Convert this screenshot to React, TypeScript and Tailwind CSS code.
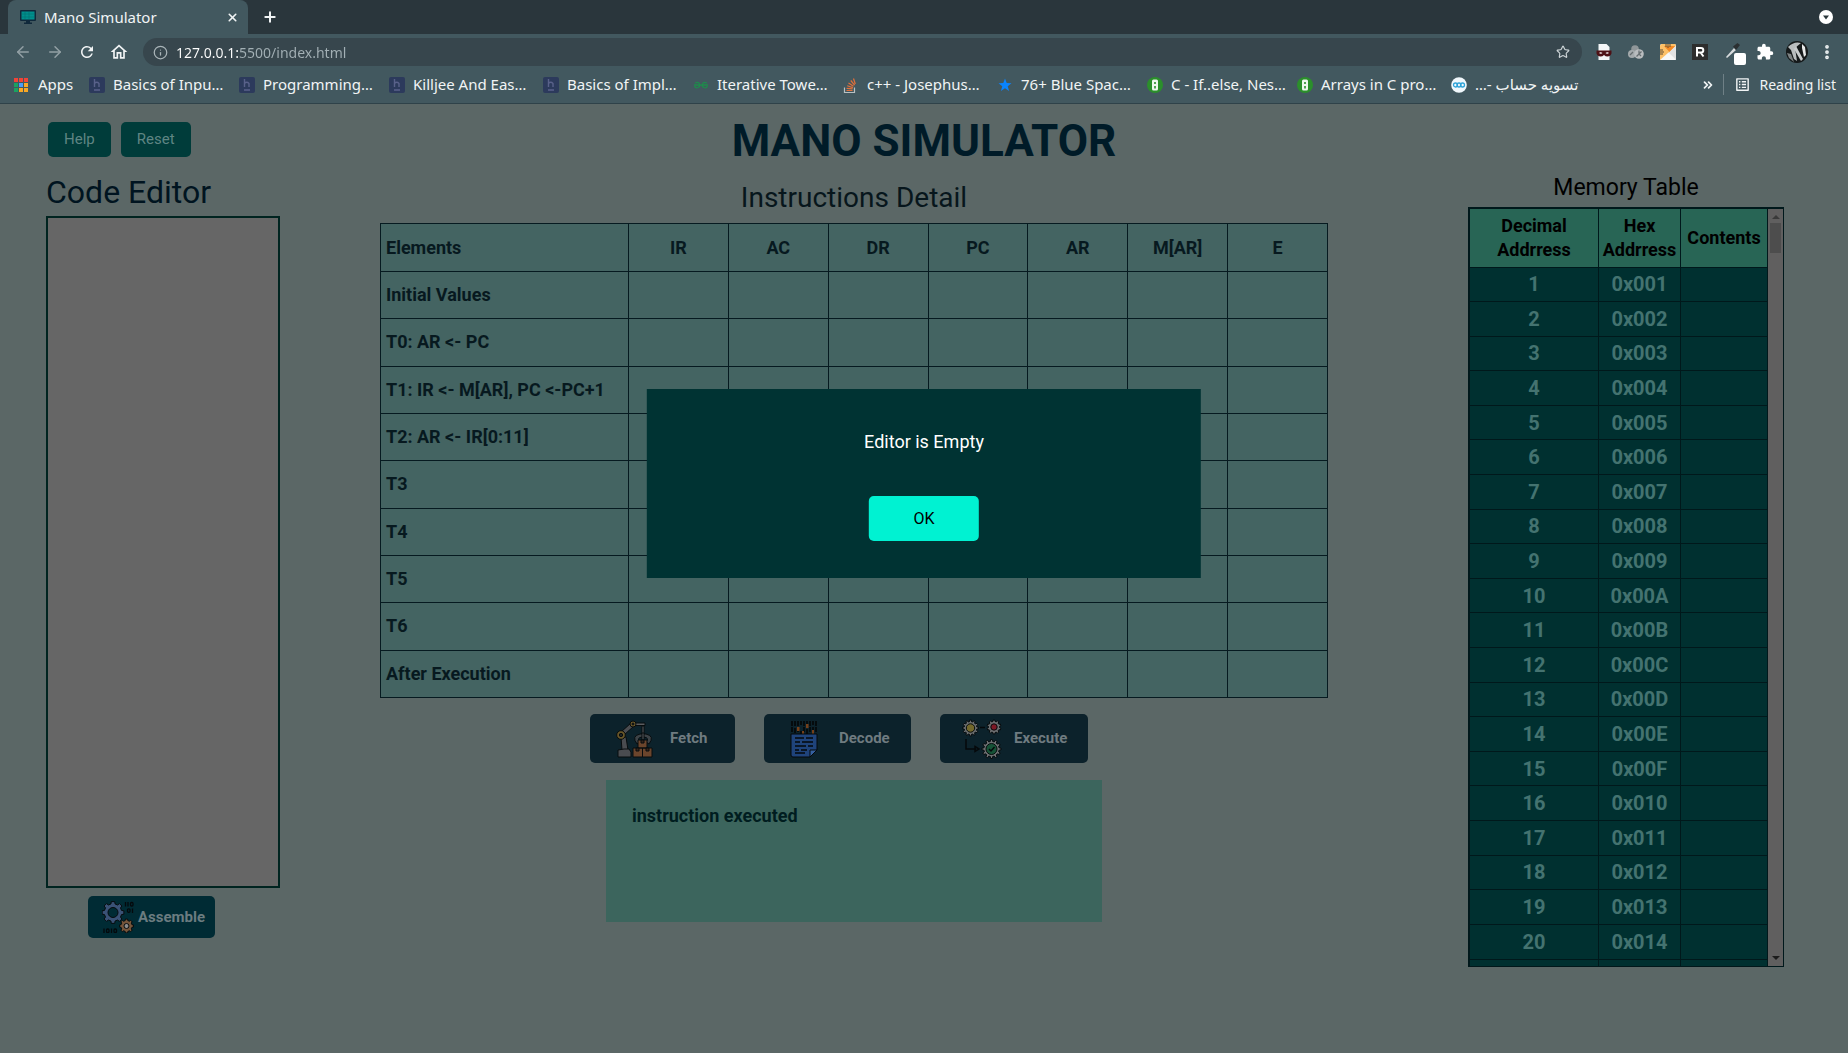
import React from "react";
import {
  ArrowLeft,
  ArrowRight,
  ChevronsRight,
  Info,
  MoreVertical,
  Plus,
  Star,
  X,
} from "lucide-react";
import { MdExtension, MdOutlineHome, MdRefresh, MdOutlineListAlt } from "react-icons/md";

const ACCENT_H = (
  <svg viewBox="0 0 16 16" className="size-4" aria-hidden="true">
    <rect width="16" height="16" rx="2" fill="#2c3a5c" />
    <path d="M5.5 2v8M5.500 6.500q2.200-2.400 4.500 0V10M5 13h6" stroke="#59618a" strokeWidth="1.400" fill="none" />
  </svg>
);

const GEEKS = (
  <svg viewBox="0 0 16 16" className="size-4" aria-hidden="true">
    <path
      d="M1 8h14M2 6q3.500-1.500 4.500 1t-1.500 3.500-3.500-1.500M14 6q-3.500-1.500-4.500 1t1.500 3.500 3.500-1.500"
      stroke="#1f8a4c"
      strokeWidth="1.300"
      fill="none"
    />
  </svg>
);

const STACK = (
  <svg viewBox="0 0 16 16" className="size-4" aria-hidden="true">
    <path d="M1.500 10.500v5h10v-5" stroke="#b9c0c2" strokeWidth="1.200" fill="none" />
    <path d="M3.500 13.500h6M3.600 11.300l6 .6M4.200 8.800l5.700 1.800M5.500 6l5 3.300M7.800 3.500l3.800 4.600M10.500 1.500l1.800 5.500" stroke="#e2703a" strokeWidth="1.200" />
  </svg>
);

const BLUE_STAR = (
  <svg viewBox="0 0 16 16" className="size-4" aria-hidden="true">
    <path d="M8 1.500l1.700 4.600 4.800.1-3.800 3 1.400 4.800L8 11.200 3.900 14l1.400-4.800-3.800-3 4.800-.1z" fill="#0a84ff" />
  </svg>
);

const GREEN_B = (
  <svg viewBox="0 0 16 16" className="size-4" aria-hidden="true">
    <circle cx="8" cy="8" r="8" fill="#2b8f2b" />
    <rect x="5" y="2.500" width="6" height="11" rx="1.500" fill="#eef7ee" />
    <path d="M7.200 5h1.600v2H7.200zM7.200 9h1.600v2.500H7.200z" fill="#2b8f2b" />
  </svg>
);

const BLUE_RINGS = (
  <svg viewBox="0 0 16 16" className="size-4" aria-hidden="true">
    <circle cx="8" cy="8" r="7.800" fill="#f1f8fc" />
    <g fill="none" stroke="#2ea3d8" strokeWidth="1.300">
      <circle cx="4.500" cy="8" r="2" />
      <circle cx="8" cy="8" r="2" />
      <circle cx="11.500" cy="8" r="2" />
    </g>
  </svg>
);

const BOOKMARKS = [
  { label: "Basics of Inpu…", icon: ACCENT_H, width: "w-[150px]" },
  { label: "Programming…", icon: ACCENT_H, width: "w-[150px]" },
  { label: "Killjee And Eas…", icon: ACCENT_H, width: "w-[154px]" },
  { label: "Basics of Impl…", icon: ACCENT_H, width: "w-[150px]" },
  { label: "Iterative Towe…", icon: GEEKS, width: "w-[150px]" },
  { label: "c++ - Josephus…", icon: STACK, width: "w-[154px]" },
  { label: "76+ Blue Spac…", icon: BLUE_STAR, width: "w-[150px]" },
  { label: "C - If..else, Nes…", icon: GREEN_B, width: "w-[150px]" },
  { label: "Arrays in C pro…", icon: GREEN_B, width: "w-[154px]" },
];

const APP_DOTS = ["#f04438", "#f04438", "#f04438", "#1aa260", "#4a9df8", "#f9a825", "#1aa260", "#f9a825", "#f9a825"];

function MonitorIcon() {
  return (
    <svg viewBox="0 0 16 16" className="size-4" aria-hidden="true">
      <rect x="0" y="1" width="16" height="11" rx="1" fill="#10293b" />
      <rect x="1.500" y="2.500" width="13" height="8" fill="#00908e" />
      <path d="M2 5h12M2 8h12M5 3v7M9 3v7" stroke="#01706f" strokeWidth=".6" />
      <path d="M6 12h4v1.500h2V15H4v-1.500h2z" fill="#10293b" />
    </svg>
  );
}

function ExtensionIcons() {
  return (
    <div className="flex items-center gap-4">
      <svg viewBox="0 0 16 16" className="size-4" aria-hidden="true">
        <path d="M2.500 0h8l3 3v13h-11z" fill="#f4f6f7" />
        <path d="M.5 6.500h15v3q-1 3-4 3-2 0-3.500-1.600Q6.500 12.500 4.500 12.500q-3 0-4-3z" fill="#4d1115" />
        <path d="M3 9q1.500-1.500 3.500 0-1.500 1.600-3.500 0zM9.500 9q2-1.500 3.500 0-2 1.600-3.500 0z" fill="#fff" />
      </svg>
      <svg viewBox="0 0 16 16" className="size-4" aria-hidden="true">
        <circle cx="7" cy="5" r="3.800" fill="#8f9699" />
        <circle cx="4" cy="10" r="4" fill="#a4aaac" />
        <circle cx="11" cy="10" r="4.800" fill="#b9bdbf" />
        <path d="M8.500 12.500l5-5M11 6.500v3.500l2 2M2 11l3-3" stroke="#656d70" strokeWidth="1.300" fill="none" />
      </svg>
      <svg viewBox="0 0 16 16" className="size-4" aria-hidden="true">
        <rect width="16" height="16" rx="1.500" fill="#f5f5f5" />
        <path d="M1.500 0h13q1.500 0 1.500 1.500L2 16H0V1.500z" fill="#fdc067" />
        <path d="M4 2h11.500L9.500 8z" fill="#f58a24" />
        <path d="M8.500 9L16 1.500V16z" fill="#e3e3e3" />
        <path d="M0 16L8.500 8.500 16 16z" fill="#f7f7f7" />
        <path d="M6 0v3M8 0v4M10 0v3M0 6h3M0 8h4M0 10h3" stroke="#5c4a35" strokeWidth="1" />
      </svg>
      <svg viewBox="0 0 16 16" className="size-4" aria-hidden="true">
        <rect width="16" height="16" fill="#2d2d2d" />
        <path d="M5 12.500V4h4q2.300 0 2.300 2.300T9 8.600H5M8.500 8.500l3 4" stroke="#fff" strokeWidth="2" fill="none" />
      </svg>
      <svg viewBox="0 0 22 22" className="mt-1 size-[22px]" aria-hidden="true">
        <path d="M2 14L10 5l2 2-9 8z" fill="#d8dcde" />
        <path d="M9 3.500L13.500 0 16 2l-4 5z" fill="#2b2f31" />
        <rect x="10" y="10" width="12" height="12" rx="2" fill="#fff" />
      </svg>
      <MdExtension className="-ml-1.5 size-[18px] text-white" />
      <svg viewBox="0 0 22 22" className="-ml-1 size-[22px]" aria-hidden="true">
        <circle cx="11" cy="11" r="11" fill="#15191a" />
        <path d="M2 6Q8 0 15 2L9 7l2 13-3-2L5 9z" fill="#b9bdbe" />
        <path d="M10 5l7 13-2 2-7-12z" fill="#c9cccd" />
        <path d="M16 3l3 3 1 8-2 2-2-9z" fill="#e7e9e9" />
        <path d="M1 12l4 1 3 8-5-4z" fill="#7d8283" />
      </svg>
    </div>
  );
}

function BrowserChrome() {
  return (
    <header className="flex flex-col border-b border-[#2f4249] bg-[#42585f] font-['Noto_Sans','DejaVu_Sans',sans-serif] text-[15px] text-[#f1f4f5]">
      <div className="flex h-[34px] items-stretch bg-[#2a363c] pl-2">
        <div className="flex w-60 items-center gap-2 rounded-t-lg bg-[#42585f] pr-2 pl-3">
          <MonitorIcon />
          <span className="flex-1">Mano Simulator</span>
          <button type="button" aria-label="Close tab" className="grid size-4 place-items-center">
            <X className="size-[13px]" strokeWidth={3} />
          </button>
        </div>
        <button type="button" aria-label="New tab" className="ml-3 grid w-5 place-items-center">
          <Plus className="size-4" strokeWidth={3} />
        </button>
        <button type="button" aria-label="Search tabs" className="mr-[15px] ml-auto grid place-items-center">
          <svg viewBox="0 0 14 14" className="size-[14px]" aria-hidden="true">
            <circle cx="7" cy="7" r="7" fill="#fff" />
            <path d="M4 5.500h6L7 9.500z" fill="#2a363c" />
          </svg>
        </button>
      </div>
      <div className="flex items-center gap-3.5 pt-1 pr-3 pl-3.5">
        <button type="button" aria-label="Back" className="text-[#93a0a5]">
          <ArrowLeft className="size-[18px]" />
        </button>
        <button type="button" aria-label="Forward" className="text-[#93a0a5]">
          <ArrowRight className="size-[18px]" />
        </button>
        <button type="button" aria-label="Reload">
          <MdRefresh className="size-[18px]" />
        </button>
        <button type="button" aria-label="Home" className="-ml-px">
          <MdOutlineHome className="size-5" />
        </button>
        <div className="flex h-7 flex-1 items-center gap-2 rounded-full bg-[#37464d] pr-3 pl-2.5">
          <Info className="size-[15px] text-[#a9b4b8]" />
          <input
            aria-label="Address"
            defaultValue="127.0.0.1:5500/index.html"
            className="min-w-0 flex-1 bg-[linear-gradient(90deg,#ffffff_64px,#a3b0b5_64px)] bg-clip-text text-[14px] text-transparent outline-none"
          />
          <button type="button" aria-label="Bookmark this page">
            <Star className="size-[14px] text-[#ccd3d6]" />
          </button>
        </div>
        <ExtensionIcons />
        <button type="button" aria-label="Menu" className="-ml-1">
          <MoreVertical className="size-[18px]" strokeWidth={3} />
        </button>
      </div>
      <nav className="flex h-[37px] items-center pr-3 pl-3.5 whitespace-nowrap">
        <a href="#apps" className="flex w-[75px] items-center gap-2.5">
          <svg viewBox="0 0 14 14" className="size-3.5" aria-hidden="true">
            {APP_DOTS.map((fill, i) => (
              <rect key={i} x={(i % 3) * 5} y={Math.floor(i / 3) * 5} width="4" height="4" fill={fill} />
            ))}
          </svg>
          Apps
        </a>
        {BOOKMARKS.map((b) => (
          <a key={b.label} href="#bookmark" className={`flex items-center gap-2 ${b.width}`}>
            {b.icon}
            {b.label}
          </a>
        ))}
        <a href="#bookmark" className="flex items-center gap-2">
          {BLUE_RINGS}
          <span dir="rtl">تسویه حساب -…</span>
        </a>
        <button type="button" aria-label="More bookmarks" className="ml-auto">
          <ChevronsRight className="size-[14px]" strokeWidth={3} />
        </button>
        <div className="ml-2 flex items-center gap-2 border-l border-[#6f8086] pl-2.5">
          <MdOutlineListAlt className="size-[17px]" />
          <a href="#reading" className="text-[14px]">
            Reading list
          </a>
        </div>
      </nav>
    </header>
  );
}

const REGISTERS = ["IR", "AC", "DR", "PC", "AR", "M[AR]", "E"];
const STEPS = [
  "Initial Values",
  "T0: AR <- PC",
  "T1: IR <- M[AR], PC <-PC+1",
  "T2: AR <- IR[0:11]",
  "T3",
  "T4",
  "T5",
  "T6",
  "After Execution",
];

function InstructionTable() {
  return (
    <table className="h-[475px] w-full table-fixed border-collapse border border-[#061a20] bg-[#446462] text-[18px] leading-6 font-bold text-[#07191f]">
      <thead>
        <tr className="h-12">
          <th className="w-[248px] border border-[#061a20] px-[5px] text-left">Elements</th>
          {REGISTERS.map((r) => (
            <th key={r} className="border border-[#061a20]">
              {r}
            </th>
          ))}
        </tr>
      </thead>
      <tbody>
        {STEPS.map((s) => (
          <tr key={s}>
            <th className="border border-[#061a20] px-[5px] text-left whitespace-nowrap">{s}</th>
            {REGISTERS.map((r) => (
              <td key={r} className="border border-[#061a20]" />
            ))}
          </tr>
        ))}
      </tbody>
    </table>
  );
}

const ADDRESSES = Array.from({ length: 20 }, (_, i) => i + 1);

function MemoryTable() {
  return (
    <div className="flex h-[760px] overflow-hidden border-2 border-r border-b border-[#00181b] bg-[#605f5f]">
      <div className="flex-1 overflow-hidden">
        <table className="h-[784px] w-full table-fixed border-collapse text-center text-[20px] leading-6 font-bold">
          <thead className="bg-[#286555] text-[18px] text-black">
            <tr className="h-[58px]">
              <th className="border-r border-b border-[#00181b] px-6">Decimal Addrress</th>
              <th className="w-[82px] border-r border-b border-[#00181b]">Hex Addrress</th>
              <th className="w-[87px] border-r border-b border-[#00181b]">Contents</th>
            </tr>
          </thead>
          <tbody className="bg-[#003030] text-[#447370]">
            {ADDRESSES.map((n) => (
              <tr key={n}>
                <td className="border-r border-b border-[#00181b]">{n}</td>
                <td className="border-r border-b border-[#00181b]">
                  0x{n.toString(16).toUpperCase().padStart(3, "0")}
                </td>
                <td className="border-r border-b border-[#00181b]" />
              </tr>
            ))}
            <tr className="h-[34px]">
              <td className="border-r border-[#00181b]" />
              <td className="border-r border-[#00181b]" />
              <td className="border-r border-[#00181b]" />
            </tr>
          </tbody>
        </table>
      </div>
      <div className="flex w-[15px] flex-col items-center py-1.5" aria-hidden="true">
        <svg viewBox="0 0 8 4" className="h-1 w-2">
          <path d="M0 4L4 0l4 4z" fill="#3a3a3a" />
        </svg>
        <div className="mt-1 h-[30px] w-[11px] bg-[#4d4d4d]" />
        <svg viewBox="0 0 8 4" className="mt-auto h-1 w-2">
          <path d="M0 0l4 4 4-4z" fill="#1c1c1c" />
        </svg>
      </div>
    </div>
  );
}

function gearOutline(teeth: number, outer: number, inner: number) {
  const step = (Math.PI * 2) / teeth;
  const points: string[] = [];
  for (let i = 0; i < teeth; i++) {
    const corners: [number, number][] = [
      [inner, -0.3],
      [outer, -0.2],
      [outer, 0.2],
      [inner, 0.3],
    ];
    for (const [radius, offset] of corners) {
      const angle = (i + offset) * step;
      points.push(`${(Math.sin(angle) * radius).toFixed(2)},${(Math.cos(angle) * radius).toFixed(2)}`);
    }
  }
  return points.join(" ");
}

type GearProps = { x: number; y: number; r: number; teeth: number; body: string; core: string; hole: number };

function Gear({ x, y, r, teeth, body, core, hole }: GearProps) {
  return (
    <g transform={`translate(${x} ${y})`} stroke="#060b0d" strokeWidth="1">
      <polygon points={gearOutline(teeth, r, r * 0.8)} fill={body} strokeLinejoin="round" />
      <circle r={hole} fill={core} />
    </g>
  );
}

function AssembleIcon() {
  return (
    <svg viewBox="0 0 32 32" className="size-8 shrink-0" aria-hidden="true">
      <Gear x={11} y={11.5} r={11} teeth={8} body="#3a5276" core="#002b34" hole={5} />
      <Gear x={24.5} y={25} r={7} teeth={8} body="#75553b" core="#8b8b8b" hole={2.5} />
      <g fill="none" stroke="#04090c" strokeWidth="1.300">
        <path d="M23.500 1v4.500M26 1v4.500" />
        <rect x="28.500" y="1.500" width="2.500" height="3.500" rx="1" />
        <rect x="25.500" y="7.800" width="2.500" height="3.500" rx="1" />
        <path d="M30.500 7.500v4.500M2 27.500v4.500M9.500 27.500v4.500" />
        <rect x="4.500" y="28" width="2.500" height="3.500" rx="1" />
        <rect x="12" y="28" width="2.500" height="3.500" rx="1" />
      </g>
    </svg>
  );
}

function FetchIcon() {
  return (
    <svg viewBox="0 0 38 38" className="size-[38px] shrink-0" aria-hidden="true">
      <g stroke="#070c0e" strokeWidth="1">
        <path d="M5 17l5 0 2 13H6z" fill="#4a4c50" />
        <path d="M2 30l6-1h5l2 3v5H2z" fill="#4a4c50" />
        <path d="M5 12L15 3l3 3L8 15z" fill="#4a4c50" />
        <path d="M18 3h11v2.500H18zM26 6h2v8h-2z" fill="#5b5d60" />
        <path d="M21 24q-6-8 3-10h6q9 2 3 10l-3-2q4-4-2-5h-2q-6 1-2 5z" fill="#3d4347" />
        <path d="M26 13h2v7h-2z" fill="#5b5d60" />
        <circle cx="5" cy="15" r="4.300" fill="#6b5829" />
        <circle cx="5" cy="15" r="1.700" fill="#1b2225" />
        <circle cx="17" cy="4" r="3" fill="#6b5829" />
        <circle cx="17" cy="4" r="1" fill="#1b2225" />
        <path d="M22 20h9v8h-9zM17 28h9.500v9H17zM26.500 28H36v9h-9.500z" fill="#6b452c" />
        <path d="M25 20h3v3h-3zM20 28h3v3h-3zM30 28h3v3h-3z" fill="#37241a" />
      </g>
    </svg>
  );
}

function DecodeIcon() {
  return (
    <svg viewBox="0 0 38 38" className="size-[38px] shrink-0" aria-hidden="true">
      <path
        d="M7 1v12M10 1v5M10 8v6M13 1v12M16 1v4M19 1v12M22 1v5M25 1v12M28 1v4M28 7v7M31 1v12M16 11v3M22 9v5"
        stroke="#05090b"
        strokeWidth="1.800"
        strokeDasharray="5 1"
      />
      <path d="M12 7h2.500v4H12zM21 4h2.500v4H21zM17 11h2v3h-2zM27 10h2v4h-2z" fill="#75401b" />
      <path d="M6 14h26v16l-7 7H8q-2 0-2-2z" fill="#1f437b" stroke="#05090b" strokeWidth="1" />
      <path d="M25 37v-7h7z" fill="#35609f" stroke="#05090b" strokeWidth="1" />
      <path d="M10 18h9M21 18h7M10 22h5M17 22h11M10 26h11M23 26h5M10 30h4M16 30h6M10 33h10" stroke="#05090b" strokeWidth="1.300" />
    </svg>
  );
}

function ExecuteIcon() {
  return (
    <svg viewBox="0 0 40 40" className="size-10 shrink-0" aria-hidden="true">
      <Gear x={8.5} y={9} r={8} teeth={12} body="#6d7072" core="#73682c" hole={4.2} />
      <Gear x={32} y={8} r={7} teeth={10} body="#6d7072" core="#7d1825" hole={3.2} />
      <Gear x={29.5} y={30} r={9.5} teeth={12} body="#6d7072" core="#165236" hole={5.5} />
      <path d="M18 8.500h5M4 20v10h10M13 27.500l4 2.500-4 2.500z" stroke="#05090b" strokeWidth="1.500" fill="none" />
      <path d="M27 30l2 2 3.500-4" stroke="#05090b" strokeWidth="1.500" fill="none" />
    </svg>
  );
}

const ACTIONS = [
  { label: "Fetch", icon: <FetchIcon />, box: "w-[145px] gap-4 pl-[26px]" },
  { label: "Decode", icon: <DecodeIcon />, box: "w-[147px] gap-4 pl-[21px]" },
  { label: "Execute", icon: <ExecuteIcon />, box: "w-[148px] gap-3 pl-[22px]" },
];

export default function App() {
  return (
    <div className="flex min-h-screen flex-col bg-[#5b6766] font-['Roboto','Open_Sans',sans-serif]">
      <BrowserChrome />
      <main className="relative flex-1">
        <div className="grid grid-cols-[1fr_auto_1fr] items-start px-12 pt-2.5">
          <div className="flex gap-2.5 pt-2 text-[15px] text-[#5f8583]">
            <button type="button" className="h-[35px] rounded-[5px] bg-[#003c3a] px-4">
              Help
            </button>
            <button type="button" className="h-[35px] rounded-[5px] bg-[#003c3a] px-4">
              Reset
            </button>
          </div>
          <h1 className="text-[44px] leading-[54px] font-bold text-[#001b28]">MANO SIMULATOR</h1>
        </div>

        <div className="grid grid-cols-[234px_1fr_316px] pr-16 pl-[46px]">
          <section className="flex flex-col items-start">
            <h2 className="pt-1 pb-1 text-[32px] leading-[40px] text-[#001420]">
              <label htmlFor="code">Code Editor</label>
            </h2>
            <textarea
              id="code"
              className="block h-[672px] w-full resize-none border-2 border-[#002420] bg-[#666666] p-2 text-black outline-none"
            />
            <button
              type="button"
              className="mt-2 ml-[42px] flex h-[42px] w-[127px] items-center gap-1 rounded-[5px] bg-[#002b34] pl-3.5 text-[15px] font-bold text-[#6b7c80]"
            >
              <AssembleIcon />
              Assemble
            </button>
          </section>

          <section className="flex flex-col items-center pr-[140px] pl-[100px]">
            <h2 className="pt-3 pb-[7px] text-[28px] leading-9 text-[#07161c]">Instructions Detail</h2>
            <InstructionTable />
            <div className="mt-4 mr-[30px] flex gap-[29px]">
              {ACTIONS.map((a) => (
                <button
                  key={a.label}
                  type="button"
                  className={`flex h-[49px] items-center rounded-[5px] bg-[#0c222b] text-[15px] font-bold whitespace-nowrap text-[#6f7b80] ${a.box}`}
                >
                  {a.icon}
                  {a.label}
                </button>
              ))}
            </div>
            <output className="mt-[17px] h-[142px] w-[496px] bg-[#3c655d] px-[26px] py-6 text-[18px] leading-6 font-bold text-[#001d20]">
              instruction executed
            </output>
          </section>

          <section>
            <h2 className="pt-1 pb-[3px] text-center text-[23px] leading-8 text-black">Memory Table</h2>
            <MemoryTable />
          </section>
        </div>

        <div
          role="dialog"
          aria-modal="true"
          aria-labelledby="alert-message"
          className="absolute top-[285px] left-1/2 flex w-[30%] min-w-80 -translate-x-1/2 flex-col items-center bg-[#003333] pt-[39px] pb-[37px]"
        >
          <p id="alert-message" className="text-[18px] leading-7 text-white">
            Editor is Empty
          </p>
          <button type="button" className="mt-10 h-[45px] w-[110px] rounded-[5px] bg-[#00f2d2] text-[16px] text-black">
            OK
          </button>
        </div>
      </main>
    </div>
  );
}
